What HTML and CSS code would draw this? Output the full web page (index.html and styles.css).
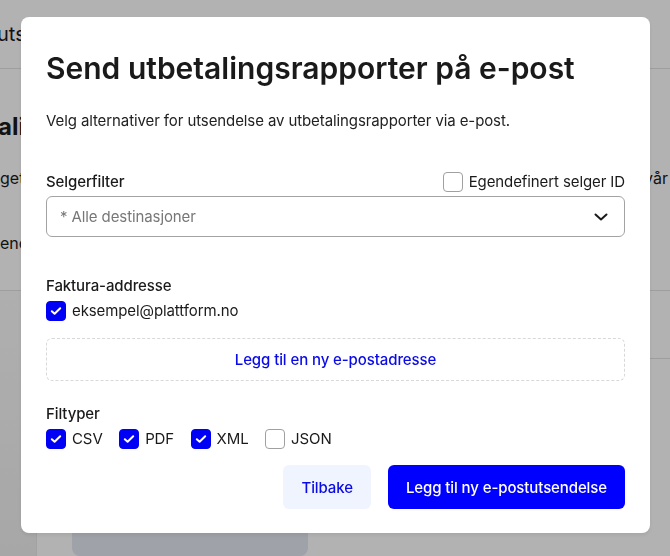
FILE: index.html
```html
<!DOCTYPE html>
<html lang="no">
<head>
<meta charset="utf-8">
<title>Send utbetalingsrapporter på e-post</title>
<link rel="stylesheet" href="styles.css">
</head>
<body>
<div class="page">
  <div class="page-header"><span class="page-header-text">utsendelser</span></div>
  <div class="page-section">
    <div class="page-title-row">
      <span class="page-title">alinger</span>
    </div>
    <div class="page-text-row">
      <span>get</span>
      <span class="page-right">vår</span>
    </div>
    <div class="page-text-row2"><span>enc</span></div>
  </div>
  <div class="page-lower">
    <div class="page-side"></div>
    <div class="page-main">
      <div class="page-row"></div>
      <div class="page-card"></div>
    </div>
  </div>
</div>

<div class="overlay"></div>

<div class="modal" role="dialog" aria-labelledby="modal-title">
  <h1 id="modal-title" class="modal-title">Send utbetalingsrapporter på e-post</h1>
  <p class="modal-desc">Velg alternativer for utsendelse av utbetalingsrapporter via e-post.</p>

  <div class="field-head">
    <span class="field-label">Selgerfilter</span>
    <label class="check">
      <span class="box"></span>
      <span class="check-text">Egendefinert selger ID</span>
    </label>
  </div>
  <div class="select">
    <span class="select-placeholder">* Alle destinasjoner</span>
    <svg class="chevron" width="14" height="8" viewBox="0 0 14 8" aria-hidden="true">
      <path d="M1.5 1.5 L7 6.5 L12.5 1.5" fill="none" stroke="#1a1a1a" stroke-width="2" stroke-linecap="round" stroke-linejoin="round"/>
    </svg>
  </div>

  <div class="field-label section-gap">Faktura-addresse</div>
  <label class="check email-row">
    <span class="box checked"><svg width="12" height="10" viewBox="0 0 12 10"><path d="M1.8 5.2 L4.6 7.8 L10.2 2.2" fill="none" stroke="#fff" stroke-width="2" stroke-linecap="round" stroke-linejoin="round"/></svg></span>
    <span class="check-text">eksempel@plattform.no</span>
  </label>
  <div class="add-email">Legg til en ny e-postadresse</div>

  <div class="field-label filetypes-label">Filtyper</div>
  <div class="filetypes">
    <label class="check">
      <span class="box checked"><svg width="12" height="10" viewBox="0 0 12 10"><path d="M1.8 5.2 L4.6 7.8 L10.2 2.2" fill="none" stroke="#fff" stroke-width="2" stroke-linecap="round" stroke-linejoin="round"/></svg></span>
      <span class="check-text">CSV</span>
    </label>
    <label class="check">
      <span class="box checked"><svg width="12" height="10" viewBox="0 0 12 10"><path d="M1.8 5.2 L4.6 7.8 L10.2 2.2" fill="none" stroke="#fff" stroke-width="2" stroke-linecap="round" stroke-linejoin="round"/></svg></span>
      <span class="check-text">PDF</span>
    </label>
    <label class="check">
      <span class="box checked"><svg width="12" height="10" viewBox="0 0 12 10"><path d="M1.8 5.2 L4.6 7.8 L10.2 2.2" fill="none" stroke="#fff" stroke-width="2" stroke-linecap="round" stroke-linejoin="round"/></svg></span>
      <span class="check-text">XML</span>
    </label>
    <label class="check">
      <span class="box"></span>
      <span class="check-text">JSON</span>
    </label>
  </div>

  <div class="actions">
    <button class="btn btn-secondary" type="button">Tilbake</button>
    <button class="btn btn-primary" type="button">Legg til ny e-postutsendelse</button>
  </div>
</div>
</body>
</html>
```

FILE: styles.css
```css
* { box-sizing: border-box; }

html, body {
  margin: 0;
  padding: 0;
  width: 670px;
  height: 556px;
  overflow: hidden;
  font-family: Inter, "Noto Sans", "DejaVu Sans", sans-serif;
  color: #1a1a1a;
  background: #ffffff;
}

/* background page */
.page {
  width: 670px;
  height: 556px;
  background: #ffffff;
}
.page-header {
  height: 69px;
  border-bottom: 1px solid #e2e2e2;
  display: flex;
  align-items: center;
  font-size: 20px;
  color: #1a1a1a;
}
.page-header-text { margin-left: -3px; }

.page-section {
  height: 222px;
  border-bottom: 1px solid #e2e2e2;
  padding-top: 43px;
}
.page-title {
  font-size: 24px;
  font-weight: 700;
  margin-left: -2px;
}
.page-text-row {
  display: flex;
  justify-content: space-between;
  margin-top: 27px;
  font-size: 16px;
}
.page-right { margin-right: 2px; }
.page-text-row2 {
  margin-top: 45px;
  font-size: 16px;
}
.page-lower {
  display: flex;
  height: 265px;
}
.page-side {
  width: 37px;
  background: linear-gradient(to bottom, #fbfbfb, #f0f0f0);
  border-right: 1px solid #e8e8e8;
}
.page-main {
  flex: 1;
  display: flex;
  flex-direction: column;
}
.page-row {
  height: 84px;
  border-bottom: 1px solid #e2e2e2;
}
.page-card {
  width: 236px;
  margin-left: 35px;
  margin-top: 165px;
  height: 40px;
  border-radius: 8px;
  background: #e5e8f3;
}

.overlay {
  position: fixed;
  inset: 0;
  background: rgba(0, 0, 0, 0.3);
}

/* modal */
.modal {
  position: fixed;
  left: 21px;
  top: 17px;
  width: 629px;
  height: 516px;
  background: #ffffff;
  border-radius: 8px;
  padding: 31px 25px 24px;
  box-shadow: 0 2px 4px rgba(0, 0, 0, 0.08);
  display: flex;
  flex-direction: column;
}

.modal-title {
  margin: 0;
  font-size: 30px;
  line-height: 40px;
  font-weight: 600;
  color: #1a1a1a;
}

.modal-desc {
  margin: 21px 0 0;
  font-size: 15px;
  line-height: 24px;
  letter-spacing: -0.1px;
  color: #222222;
}

.field-head {
  margin-top: 37px;
  height: 24px;
  display: flex;
  justify-content: space-between;
  align-items: center;
}

.field-label {
  font-size: 15px;
  line-height: 24px;
  letter-spacing: -0.1px;
  font-weight: 500;
  color: #1a1a1a;
}

.check {
  display: flex;
  align-items: center;
  gap: 6px;
  font-size: 15px;
  letter-spacing: -0.1px;
  line-height: 20px;
  color: #1a1a1a;
}

.box {
  width: 20px;
  height: 20px;
  border: 1px solid #a0a0a0;
  border-radius: 4px;
  background: #fff;
  display: flex;
  align-items: center;
  justify-content: center;
  flex: none;
}
.box.checked {
  background: #0000f5;
  border-color: #0000f5;
}

.select {
  margin-top: 2px;
  height: 41px;
  border: 1px solid #a3a3a3;
  border-radius: 6px;
  display: flex;
  align-items: center;
  justify-content: space-between;
  padding: 0 16px 0 13px;
}
.select-placeholder {
  font-size: 15px;
  letter-spacing: -0.1px;
  color: #777777;
}

.section-gap { margin-top: 37px; }

.email-row { margin-top: 3px; }

.add-email {
  margin-top: 17px;
  height: 43px;
  border: 1px dashed #d8d8d8;
  border-radius: 6px;
  display: flex;
  align-items: center;
  justify-content: center;
  font-size: 15px;
  letter-spacing: -0.1px;
  font-weight: 500;
  color: #0a0ae6;
}

.filetypes-label { margin-top: 21px; }

.filetypes {
  margin-top: 3px;
  display: flex;
  gap: 16.5px;
}

.actions {
  margin-top: 16px;
  display: flex;
  justify-content: flex-end;
  gap: 17px;
}

.btn {
  height: 44px;
  border: none;
  border-radius: 6px;
  font-family: Inter, "Noto Sans", sans-serif;
  font-size: 15px;
  letter-spacing: -0.1px;
  font-weight: 500;
  padding: 0 18px;
  cursor: pointer;
}
.btn-secondary {
  background: #eff4ff;
  color: #0a0ae6;
}
.btn-primary {
  background: #0000ff;
  color: #ffffff;
}
```
